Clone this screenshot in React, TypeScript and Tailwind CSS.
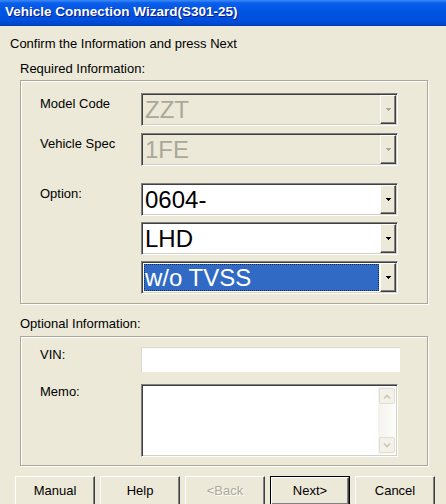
import React from 'react';

// Classic Windows dialog look: sunken fields, raised buttons, etched group boxes
const sunken =
  'border border-t-[#808080] border-l-[#808080] border-r-white border-b-white shadow-[inset_1px_1px_0_#404040,inset_-1px_-1px_0_#D4D0C8]';
const raised =
  'border border-t-white border-l-white border-r-[#404040] border-b-[#404040] shadow-[inset_-1px_-1px_0_#808080]';
const etched =
  'border border-[#ACA899] shadow-[inset_1px_1px_0_#fff,1px_1px_0_#fff]';

const Arrow: React.FC<{ disabled?: boolean }> = ({ disabled }) => (
  <svg width="5" height="3" shapeRendering="crispEdges" className="block">
    <g fill={disabled ? '#ACA899' : '#000'}>
      <rect x="0" y="0" width="5" height="1" />
      <rect x="1" y="1" width="3" height="1" />
      <rect x="2" y="2" width="1" height="1" />
    </g>
  </svg>
);

interface ComboProps {
  value: string;
  disabled?: boolean;
  selected?: boolean;
}

const Combo: React.FC<ComboProps> = ({ value, disabled, selected }) => (
  <div
    className={`flex h-[33px] w-[257px] shrink-0 ${sunken} ${
      disabled ? 'bg-[#ECE9D8]' : 'bg-white'
    }`}
  >
    <div className="flex min-w-0 flex-1 items-stretch p-[2px] pr-[1px]">
      <div
        className={`flex flex-1 items-center pl-[1px] text-[24px] leading-none ${
          selected
            ? 'bg-[#316AC5] text-white outline-1 outline-dotted outline-[#1E2A44] -outline-offset-1'
            : disabled
            ? 'text-[#ACA899]'
            : 'text-black'
        }`}
      >
        {value}
      </div>
    </div>
    <div
      className={`my-[1px] mr-[1px] flex w-[16px] items-center justify-center bg-[#ECE9D8] ${raised}`}
    >
      <Arrow disabled={disabled} />
    </div>
  </div>
);

const Row: React.FC<{ label?: string; className?: string; children: React.ReactNode }> = ({
  label,
  className,
  children,
}) => (
  <div className={`flex pl-[19px] ${className ?? ''}`}>
    <div className="w-[101px] shrink-0 pt-[3px] text-[13px] leading-[15px] text-black">{label}</div>
    {children}
  </div>
);

const ScrollBtn: React.FC<{ up?: boolean }> = ({ up }) => (
  <div className="flex h-[16px] w-[16px] items-center justify-center rounded-[2px] border border-[#E0DED3] bg-[#F3F1E8]">
    <svg width="8" height="5" viewBox="0 0 8 5">
      <path
        d={up ? 'M1 4.5 4 1.5 7 4.5' : 'M1 0.5 4 3.5 7 0.5'}
        fill="none"
        stroke="#C9C6BA"
        strokeWidth="1.6"
      />
    </svg>
  </div>
);

const Button: React.FC<{ label: string; disabled?: boolean; isDefault?: boolean }> = ({
  label,
  disabled,
  isDefault,
}) => (
  <div className={`h-[30px] w-[80px] shrink-0 ${isDefault ? 'border border-black' : ''}`}>
    <div
      className={`flex h-full w-full items-center justify-center bg-[#ECE9D8] text-[13px] ${raised} ${
        disabled ? 'text-[#ACA899] [text-shadow:1px_1px_0_#fff]' : 'text-black'
      }`}
    >
      {label}
    </div>
  </div>
);

export default function App() {
  return (
    <div className="flex h-[504px] w-[446px] flex-col overflow-hidden bg-[#ECE9D8] font-['Liberation_Sans',Arial,sans-serif]">
      {/* title bar */}
      <div className="flex h-[26px] shrink-0 items-center border-b border-[#003CB4] bg-[linear-gradient(180deg,#3C8CF6_0%,#0A5EEB_12%,#0054E3_45%,#0050DD_80%,#0044CC_100%)] pl-[5px]">
        <span className="text-[13.5px] font-bold text-white [text-shadow:1px_1px_0_#0A1883]">
          Vehicle Connection Wizard(S301-25)
        </span>
      </div>

      <div className="pl-[10px]">
        <div className="mt-[10px] text-[13px] leading-[15px] text-black">
          Confirm the Information and press Next
        </div>

        <div className="ml-[10px]">
          <div className="mt-[10px] text-[13px] leading-[15px] text-black">Required Information:</div>
          <div className={`mt-[4px] h-[224px] w-[408px] pt-[12px] ${etched}`}>
            <Row label="Model Code">
              <Combo value="ZZT" disabled />
            </Row>
            <Row label="Vehicle Spec" className="mt-[7px]">
              <Combo value="1FE" disabled />
            </Row>
            <Row label="Option:" className="mt-[17px]">
              <div className="flex flex-col gap-[6px]">
                <Combo value="0604-" />
                <Combo value="LHD" />
                <Combo value="w/o TVSS" selected />
              </div>
            </Row>
          </div>

          <div className="mt-[12px] text-[13px] leading-[15px] text-black">Optional Information:</div>
          <div className={`mt-[5px] h-[130px] w-[408px] pt-[10px] ${etched}`}>
            <Row label="VIN:" className="[&>div:first-child]:pt-0">
              <div className="h-[25px] w-[259px] border-t border-l border-[#DCD9CC] bg-white" />
            </Row>
            <Row label="Memo:" className="mt-[12px] [&>div:first-child]:pt-0">
              <div className={`flex h-[73px] w-[257px] bg-white p-[2px] ${sunken}`}>
                <div className="flex-1" />
                <div className="flex w-[17px] flex-col justify-between bg-[linear-gradient(90deg,#F4F3EE,#FBFBF8)] p-[1px] pb-[1px]">
                  <ScrollBtn up />
                  <ScrollBtn />
                </div>
              </div>
            </Row>
          </div>
        </div>
      </div>

      <div className="mt-[10px] flex gap-[5px] pl-[15px]">
        <Button label="Manual" />
        <Button label="Help" />
        <Button label="<Back" disabled />
        <Button label="Next>" isDefault />
        <Button label="Cancel" />
      </div>
    </div>
  );
}
